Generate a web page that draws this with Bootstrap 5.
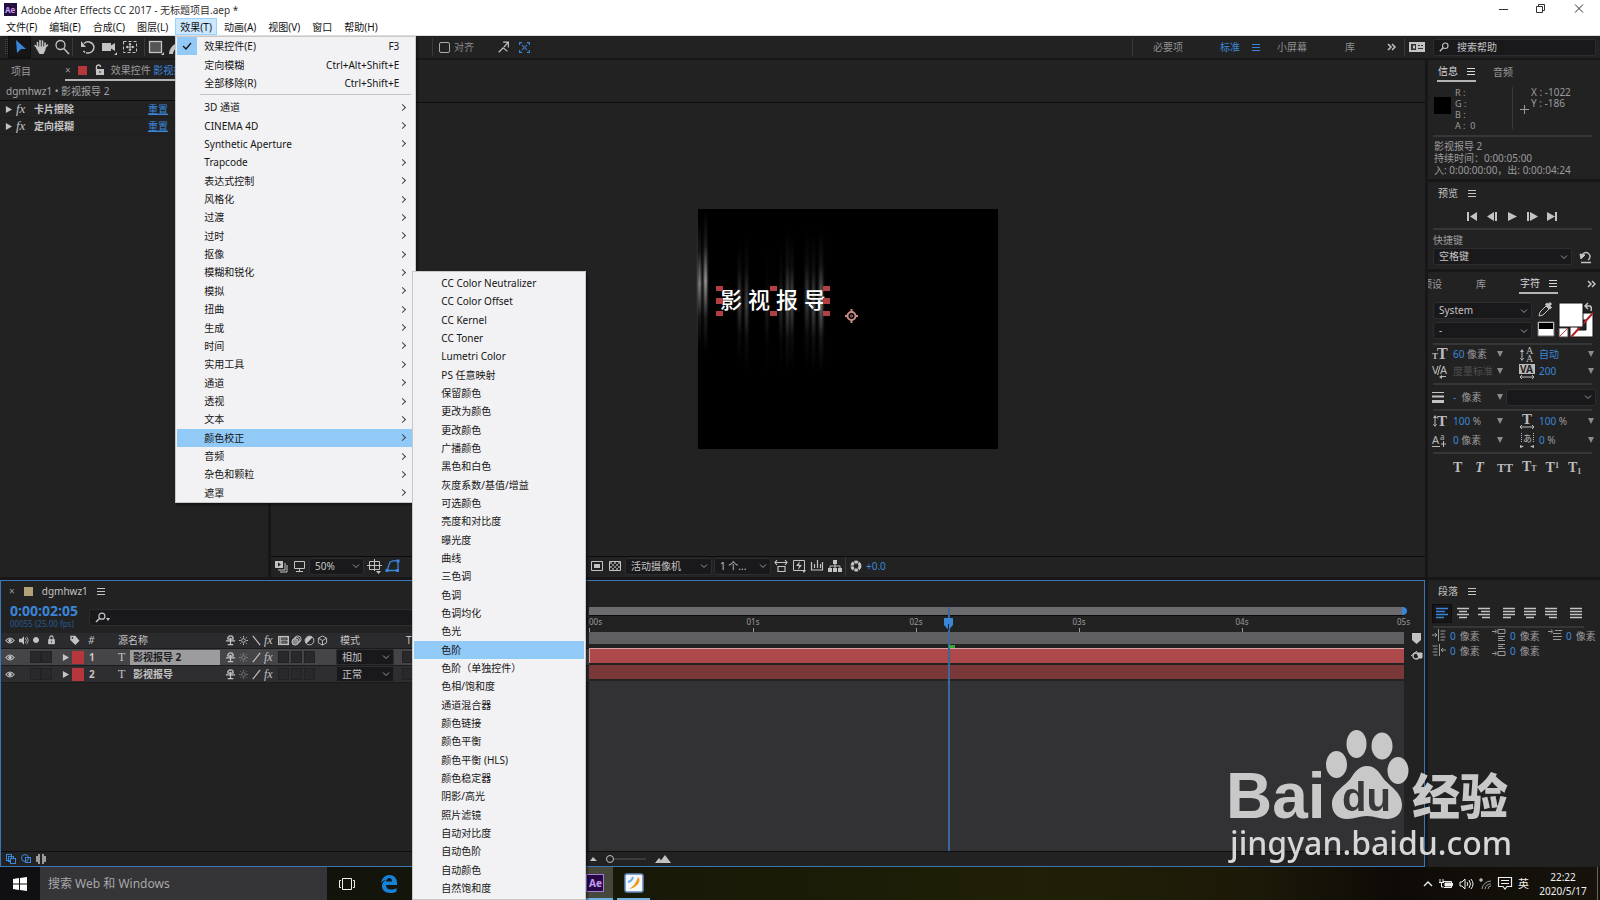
<!DOCTYPE html>
<html lang="zh-CN">
<head>
<meta charset="utf-8">
<meta name="viewport" content="width=device-width, initial-scale=1">
<title>Adobe After Effects CC 2017 - 无标题项目.aep *</title>
<link rel="stylesheet" href="https://cdn.jsdelivr.net/npm/bootstrap@5.3.0/dist/css/bootstrap.min.css">
<style>
:root{--panel:#232223;--gap:#171618;--rule:#363537;--txt:#9b9a9b;--hi:#c4c3c4;--blue:#3a86d8;--red:#b6373b}
body{font-family:"Noto Sans","Noto Sans CJK SC",sans-serif;font-size:10px;line-height:14px;color:var(--txt);background:var(--gap);overflow:hidden}
svg{display:block;flex:none;overflow:visible}
svg:not([fill]){fill:none}
svg:not([stroke]){stroke:currentColor}
button,.plain{font:inherit;color:inherit;background:none;border:0;padding:0;text-decoration:none;white-space:nowrap}
.plain:focus{outline:0}
.plain::placeholder{color:inherit;opacity:1}
.ic{width:16px;height:16px}
.ham{width:8px;height:8px}
.hi{color:var(--hi)} .hot{color:var(--blue)} .mid{color:var(--txt)} .dim{color:#4f4e50}
.solid{fill:currentColor;stroke:none}
.titlebar{height:18px;background:#fff;color:#333}
.titlebar .name{padding-top:2px}
.win-buttons{gap:26px;margin-right:15px}
.menubar{height:18px;background:#fff;color:#111;border-bottom:1px solid #ddd;padding-left:1px;gap:2px}
.menubar .top{padding:0 5px;height:17px}
.menubar .opened{background:#cce8ff;box-shadow:inset 0 0 0 1px #99d1ff}
/* menus */
.popmenu{position:absolute;z-index:20;background:#f2f1f3;color:#151515;border:1px solid #c9c8ca;display:flex;flex-direction:column;padding:0 1px;box-shadow:2px 2px 2px #0006}
.popmenu .row-item{flex:1 1 0;min-height:0;display:flex;align-items:center;text-align:left;padding:0 15px 0 27px;position:relative}
.popmenu .row-item.on{background:#91c9f7}
.popmenu .row-item.sub::after{content:"";position:absolute;right:9px;width:5px;height:5px;border:solid #444;border-width:1px 1px 0 0;transform:rotate(45deg)}
.popmenu hr{margin:2px 3px 3px 23px;border:0;border-top:1px solid #c4c3c5;opacity:1}
.popmenu .tick{position:absolute;left:0;top:0;width:20px;height:100%;background:#91c9f7}
.fx-menu{left:0;top:18px;width:241px;height:467px}
.color-menu{left:236px;top:234px;width:174px;height:629px;padding:2px 1px}
/* tool bar */
.tools{height:22px;background:var(--panel);margin-bottom:2px}
.vsep{width:1px;height:18px;background:#3a393a;flex:none}
.tool{width:21px;height:20px;display:flex;align-items:center;justify-content:center}
.tool.active{background:#161517;box-shadow:0 0 0 1px #0e0e0f}
.tools-hidden{width:266px;flex:none}
.snap-label{padding-left:6px;gap:4px;margin-right:19px;color:#8a898a}
.tick-box.form-check-input{width:11px;height:11px;margin:0;background:none;border:1px solid #aaa;border-radius:2px}
.spaces{width:468px;color:#8f8e8f}
.spaces button{flex:none;text-align:left;padding-left:20px}
.w-a{width:67px}.w-b{width:57px;gap:12px}.w-c{width:68px}.w-d{width:42px}
.field{background-color:#19181a;border:1px solid #2d2c2e;color:var(--hi);font-size:10px;line-height:13px;padding:0 5px;border-radius:2px;height:17px;min-height:0}
.form-select.field{background-image:url("data:image/svg+xml,%3csvg xmlns='http://www.w3.org/2000/svg' viewBox='0 0 8 8'%3e%3cpath fill='none' stroke='%23999' d='M1 2.500 4 5.500 7 2.500'/%3e%3c/svg%3e");background-repeat:no-repeat;background-size:8px 8px;background-position:right 3px center;padding:0 12px 0 5px}
/* workspace */
.space{display:grid;grid-template:516fr 287fr / 268px minmax(0,1fr) 172px;gap:3px;flex:1;min-height:0}
.pane{background:var(--panel);min-width:0;min-height:0;overflow:hidden}
.tabs{height:22px;display:flex;align-items:center;flex:none}
.tabs .cur{color:#dad9da;border-bottom:2px solid #b5b4b5;height:20px;display:flex;align-items:center;gap:9px;padding:0 1px}
.tabs .plain-tab{padding:0 34px 0 11px}
.tabs .fx-tab{gap:7px;padding:0;flex:1}
.swatch{width:9px;height:9px;flex:none;background:var(--red)}
.swatch.sand{background:#b3a17c}
.comp-name{padding:2px 6px;height:19px;border-bottom:1px solid #0c0b0d;color:#a5a4a5}
.effect{height:17px;border-bottom:1px solid #1d1c1e;gap:4px;color:var(--hi);font-weight:700;padding:0 5px}
.effect a{color:var(--blue);font-weight:400}
.effect .title{width:110px}
.fxmark{font:italic 13px "Liberation Serif",serif;width:14px}
.comp-head{height:43px;border-bottom:1px solid #0c0b0d}
.stage{width:300px;height:240px;background:#000;position:relative;flex:none}
.stage svg{position:absolute;left:0;top:0}
.caption-line{position:absolute;left:22px;top:73px;font:500 22px/32px "Noto Sans CJK SC",sans-serif;gap:6px;color:#fff}
.viewbar{height:21px;border-top:1px solid #0c0b0d;gap:2px;padding:0 0 1px 2px}
.w-55{width:55px}.w-57{width:57px}.w-87{width:87px}
.viewbar-hidden{width:185px;flex:none}
/* timeline */
.timeline{grid-column:1/3;border:1px solid #3c76b4;display:flex;position:relative}
.left-side{width:588px;flex:none;display:flex;flex-direction:column}
.tl-tab{height:21px;padding-left:8px;gap:9px}
.tl-head{height:31px}
.clock-box{width:88px;padding:1px 0 0 9px}
.code-text{font:700 14px/16px "Open Sans",sans-serif;color:var(--blue)}
.frames{font-size:8px;line-height:10px;color:#245a92}
.tl-find{flex:1;margin-top:7px}
.layers{width:100%;table-layout:fixed;border-collapse:collapse}
.layers th,.layers td{height:16px;padding:0;font-weight:400;vertical-align:middle;border-bottom:1px solid #1b1a1c;overflow:hidden;color:var(--hi)}
.layers th{background:#2b2a2c}
.layers td{background:#2e2d2f;height:17px}
.layers .sel td{background:#454446}
.c1{width:57px}.c2{width:48px}.c3{width:115px}.c4{width:115px}.c5{width:62px}
.th-tag{padding-left:11px}.th-name{padding-left:12px}
.sw{padding-left:4px;gap:2px}
.sw svg{width:11px;height:11px}
.sw i{font:italic 12px "Liberation Serif",serif;width:12px}
.sw .faint{opacity:.5}
.cellbox{width:11px;height:12px;background:#29282a;flex:none;border:1px solid #222123}
.eye-on{margin-right:15px}
.twirl{margin:0 3px 0 4px}
.label-red{width:12px;height:13px;background:var(--red);margin-right:5px}
.type-t{width:24px;padding-left:12px;font:12px "Liberation Serif",serif}
.lname{height:15px;width:90px;font-weight:700;padding-left:3px}
.sel .lname{background:#9c9b9d;color:#1c1b1d}
.mode{height:16px;width:58px}
.tracks{flex:1;min-width:0;display:flex;flex-direction:column;position:relative;margin-right:20px}
.navbar-time{height:8px;background:#6c6b6d;margin-top:26px;position:relative}
.navbar-time svg{position:absolute;right:-3px;top:0}
.ruler{height:17px;display:flex;position:relative;font-size:8px;line-height:12px;border-top:1px solid #0d0c0e}
.ruler i{font-style:normal;flex:1 1 0;width:0}
.ruler i span{display:inline-block;width:20px;margin-left:-9px;text-align:center;background:linear-gradient(#999,#999) center bottom/1px 4px no-repeat;height:16px}
.ruler i:first-child span{margin-left:0;text-align:left;background-position:left bottom}
.ruler .last{position:absolute;right:-6px}
.workarea{height:12px;background:#5f5e60;margin-bottom:4px}
.clip1{height:15px;background:#ad484b;border-top:1px solid #d9a3a4;border-left:1px solid #d9a3a4;margin-bottom:2px}
.clip2{height:14px;background:#7b3839;margin-bottom:2px}
.track-empty{flex:1;background:#323133}
.head{position:absolute;left:44%;top:26px;bottom:15px;width:2px;background:#39699b}
.head .knob{position:absolute;left:-5px;top:11px}
.head .cached{position:absolute;left:1px;top:38px}
.zoombar{height:15px;border-top:1px solid #0e0d0f;flex:none;gap:5px;padding-left:5px}
.zoombar.flush{padding-left:0}
.markers{position:absolute;right:1px;top:51px}
/* right column */
.rside{grid-row:1/3;grid-column:3;display:flex;flex-direction:column;min-height:0;gap:3px}
.rule{height:2px;background:var(--rule);margin:0 8px 0 5px}
.info-pane{height:119px;flex:none}
.info-pane .tabs{padding:1px 0 0 9px;gap:17px}
.info-grid{line-height:11px;padding:5px 0 0 6px;height:53px}
.info-grid .chip{width:17px;height:17px;background:#000;margin:10px 4px 0 0}
.info-grid .rgb{width:57px;font-size:9px}
.info-grid .bar{width:1px;height:42px;background:#3a393a}
.info-grid .plus{margin:18px 2px 0 7px}
.info-text{line-height:12px;padding:3px 0 0 6px}
.preview-pane{height:87px;flex:none}
.one-tab{height:22px;display:flex;align-items:center;padding-left:10px;gap:10px}
.transport{padding:8px 0 0 38px;height:24px;gap:8px}
.key-label{padding:3px 0 1px 5px}
.key-row{padding:0 8px 0 5px;gap:8px}
.char-tabs{height:23px}
.char-tabs .t1{margin-left:-6px}.char-tabs .t2{margin-left:34px}.char-tabs .t3{margin-left:33px}
.font-row{padding:7px 6px 4px 5px;height:48px;gap:6px}
.font-col{width:100px;gap:3px}
.char-row{display:grid;grid-template-columns:21px 44px 22px 20px 1fr 8px;align-items:center;height:17px;padding:0 4px;white-space:nowrap}
.char-row.stroke-row{height:24px;grid-template-columns:21px 44px 9px 1fr}
.char-row.tall{height:20px}
.dn{width:0;height:0;border:3px solid transparent;border-top:6px solid #8d8c8d;border-bottom:0}
.styles{font-family:"Liberation Serif",serif;font-size:14px;font-weight:700;color:#bbb;line-height:16px;padding:5px 0 0 25px;gap:9px}
.styles sup,.styles sub,.styles small{font-size:8px;font-weight:700}
.styles .caps{font-size:12px}
.para-pane{flex:none;height:calc((100% - 3px)*287/803)}
.aligns{padding:3px 0 0 5px;height:20px;gap:3px}
.aligns .tool{width:18px;height:17px}
.aligns svg,.para-row svg{width:14px;height:12px}
.para-pane .rule{margin:4px 16px 1px 5px}
.para-row{display:grid;grid-template-columns:60px 56px 1fr;padding-left:4px;height:15px;align-items:center;white-space:nowrap}
.para-row span{display:flex;gap:4px}
/* task bar */
.taskbar{height:33px;background:linear-gradient(90deg,#0b0a06 0,#12130b 20%,#191a07 45%,#202006 65%,#1c1a08 78%,#0e0b07 87%,#17130c 100%);color:#f0f0f0}
.start{width:40px;background:#101012}
.find{width:287px;height:33px;background:#353437;color:#a9a8aa;border:0;font-size:12px;padding:0 8px}
.find::placeholder{color:#a9a8aa;opacity:1}
.taskview{margin:0 24px 0 11px}
.taskbar-hidden{width:185px;flex:none}
.app{height:33px;border-bottom:2px solid #6fb0e0;display:flex;align-items:center}
.app.running{background:#45483a;width:30px;padding-left:3px}
.app.paint{width:33px;justify-content:center;margin-left:4px}
.tray{gap:6px}
.clock{width:52px;margin:0 8px 0 2px}
.peek{width:1px;height:33px;background:#666;margin-right:2px}
.ime{font-size:11px}
.stamp{position:fixed;right:84px;bottom:34px;z-index:5;pointer-events:none}
</style>
</head>
<body class="vh-100 d-flex flex-column">
<svg width="0" height="0" class="position-absolute">
<symbol id="arrow" viewBox="0 0 16 16"><path d="M4 1l10 9H9l-4 4z" class="solid"/></symbol>
<symbol id="hand" viewBox="0 0 16 16"><path d="M4.500 9V3.500M7 8V1.500M9.500 8V2M12 9V4M4.500 9 2 6.500M12 8.500 14.500 6" stroke-width="1.600" stroke-linecap="round"/><path d="M4 7.500h8.500V11L10.500 15H6.500L3 9z" class="solid"/></symbol>
<symbol id="lens" viewBox="0 0 16 16"><circle cx="6.500" cy="6" r="4.500" stroke-width="1.300"/><path d="M9.800 9.500 15 15" stroke-width="1.600"/></symbol>
<symbol id="rot" viewBox="0 0 16 16"><path d="M4 4.500A6 6 0 0 1 14 8a6 6 0 0 1-6 6" stroke-width="1.500"/><path d="M8 14a6 6 0 0 1-5-2.500" stroke-width="1.500" stroke-dasharray="2 1"/><path d="M1 2v6h5z" class="solid"/></symbol>
<symbol id="cam" viewBox="0 0 16 16"><path d="M1 4h9v2.500L14 4v8l-4-2.500V12H1zM16 16h-3l3-3z" class="solid"/></symbol>
<symbol id="pan" viewBox="0 0 16 16"><rect x="1.500" y="2.500" width="13" height="11" stroke-dasharray="3 2"/><path d="M8 4v8M4 8h8"/><path d="M8 3.500 9.500 6h-3zM8 12.500 9.500 10h-3zM3.500 8 6 6.500v3zM12.500 8 10 6.500v3z" class="solid"/></symbol>
<symbol id="sq" viewBox="0 0 16 16"><rect x="1.500" y="2.500" width="12" height="11" fill="#555" stroke-width="1.300"/><path d="M16 16h-3l3-3z" class="solid"/></symbol>
<symbol id="snap" viewBox="0 0 16 16"><path d="M2 14 7 9l5 4M7 2.500h6v6M13 2.500 8 8" stroke-width="1.300"/></symbol>
<symbol id="exp" viewBox="0 0 16 16"><path d="M2 5V2h3M11 2h3v3M14 11v3h-3M5 14H2v-3M5 5l2 2M11 5 9 7M5 11l2-2M11 11 9 9" stroke-width="1.400"/><circle cx="8" cy="8" r="1"/></symbol>
<symbol id="ham" viewBox="0 0 8 8"><path d="M0 1.500h8M0 4.500h8M0 7.500h8"/></symbol>
<symbol id="lock" viewBox="0 0 10 12"><rect x="1" y="5" width="8" height="6" class="solid"/><path d="M3 5V3a2 2 0 0 1 4 0v2" stroke-width="1.300"/><path d="M5 7v2" stroke="#222"/></symbol>
<symbol id="unlock" viewBox="0 0 10 12"><rect x="2" y="5" width="8" height="6" class="solid"/><path d="M2.500 7V3a2 2 0 0 1 4 0" stroke-width="1.400"/><path d="M6 7v2" stroke="#222"/></symbol>
<symbol id="tri" viewBox="0 0 8 8"><path d="M1 0l7 4-7 4z" class="solid"/></symbol>
<symbol id="find" viewBox="0 0 12 12"><circle cx="7.500" cy="4.500" r="3.300" stroke-width="1.300"/><path d="M5 7 1 11" stroke-width="1.600"/></symbol>
<symbol id="eye" viewBox="0 0 12 10"><path d="M1 5q5-6 10 0-5 6-10 0z" stroke-width="1.300"/><circle cx="6" cy="5" r="1.700" fill="currentColor"/></symbol>
<symbol id="spk" viewBox="0 0 12 10"><path d="M0 3h3l3-3v10L3 7H0z" class="solid"/><path d="M7.500 2q3 3 0 6M9 .5q4 4.500 0 9"/></symbol>
<symbol id="tag" viewBox="0 0 12 12"><path d="M1 1h6l5 6-5 5-6-6z" class="solid"/><circle cx="3.500" cy="3.500" r="1" fill="#222" stroke="none"/></symbol>
<symbol id="shy" viewBox="0 0 12 12"><path d="M3 5V4a3 3 0 0 1 6 0v1M1 6.500h10M6 3v8M3 10.500h6M3.500 4.500h5" stroke-width="1.300"/></symbol>
<symbol id="sun" viewBox="0 0 12 12"><circle cx="6" cy="6" r="2"/><path d="M6 1v2M6 9v2M1 6h2M9 6h2M2.500 2.500l1 1M8.500 8.500l1 1M9.500 2.500l-1 1M3.500 8.500l-1 1"/></symbol>
<symbol id="slash" viewBox="0 0 12 12"><path d="M10 1l-8 10" stroke-width="1.300"/></symbol>
<symbol id="back" viewBox="0 0 12 12"><path d="M2 1l8 10" stroke-width="1.300"/></symbol>
<symbol id="film" viewBox="0 0 12 12"><path d="M0 1h12v10H0z" class="solid"/><path d="M4 3h6v2.500H4zM4 7h6v2H4zM2 2v8" fill="#777" stroke="#222" stroke-width=".7"/></symbol>
<symbol id="blur" viewBox="0 0 12 12"><circle cx="7.500" cy="4.500" r="3.500"/><circle cx="6" cy="6" r="3.500"/><circle cx="4.500" cy="7.500" r="3.500" fill="#888"/></symbol>
<symbol id="half" viewBox="0 0 12 12"><circle cx="6" cy="6" r="4.800"/><path d="M2.500 9.500a5 5 0 0 1 7-7z" class="solid"/></symbol>
<symbol id="cube" viewBox="0 0 12 12"><path d="M6 1l4.500 2.500v5L6 11 1.500 8.500v-5zM1.500 3.500 6 6l4.500-2.500M6 6v5"/></symbol>
<symbol id="more" viewBox="0 0 9 8"><path d="M1 1l3 3-3 3M5 1l3 3-3 3" stroke-width="1.500"/></symbol>
<symbol id="alines" viewBox="0 0 14 12"><path d="M1 1.500h12M1 4.500h9M1 7.500h12M1 10.500h8" stroke-width="1.300"/></symbol>
<symbol id="clines" viewBox="0 0 14 12"><path d="M1 1.500h12M3 4.500h8M1 7.500h12M3 10.500h8" stroke-width="1.300"/></symbol>
<symbol id="rlines" viewBox="0 0 14 12"><path d="M1 1.500h12M4 4.500h9M1 7.500h12M5 10.500h8" stroke-width="1.300"/></symbol>
<symbol id="jl" viewBox="0 0 14 12"><path d="M1 1.500h12M1 4.500h12M1 7.500h12M1 10.500h8" stroke-width="1.300"/></symbol>
<symbol id="jc" viewBox="0 0 14 12"><path d="M1 1.500h12M1 4.500h12M1 7.500h12M3 10.500h8" stroke-width="1.300"/></symbol>
<symbol id="jr" viewBox="0 0 14 12"><path d="M1 1.500h12M1 4.500h12M1 7.500h12M5 10.500h8" stroke-width="1.300"/></symbol>
<symbol id="jlines" viewBox="0 0 14 12"><path d="M1 1.500h12M1 4.500h12M1 7.500h12M1 10.500h12" stroke-width="1.300"/></symbol>
<symbol id="indent" viewBox="0 0 14 12"><path d="M0 6h5M3 4l2 2-2 2M6.500 0v12M8.500 2h5M8.500 5h4M8.500 8h5M8.500 11h4"/></symbol>
<symbol id="indentr" viewBox="0 0 14 12"><path d="M14 6H9M11 4 9 6l2 2M7.500 0v12M.5 2h5M1.500 5h4M.5 8h5M1.500 11h4"/></symbol>
<symbol id="before" viewBox="0 0 14 12"><path d="M0 2.500h4M3 .5l2 2-2 2M6 .5h7v4H6zM6 7.500h7M6 9.500h5M6 11.500h7"/></symbol>
<symbol id="after" viewBox="0 0 14 12"><path d="M0 9.500h4M3 7.500l2 2-2 2M6 7.500h7v4H6zM6 .5h7M6 2.500h5M6 4.500h7"/></symbol>
<symbol id="first" viewBox="0 0 14 12"><path d="M0 2.500h4M3 .5l2 2-2 2M7 1.500h7M5 4.500h8M5 7.500h9M5 10.500h8"/></symbol>
</svg>

<header class="titlebar d-flex align-items-center text-nowrap">
  <svg width="13" height="13" class="ms-1 me-1" viewBox="0 0 13 13" stroke="none"><rect width="13" height="13" fill="#24103f"/><text x="1" y="9.500" fill="#c79bf2" font-size="8" font-weight="700">Ae</text></svg>
  <span class="name flex-grow-1">Adobe After Effects CC 2017 - 无标题项目.aep *</span>
  <div class="win-buttons d-flex">
    <button aria-label="最小化"><svg width="12" height="12"><path d="M2 6.500h9"/></svg></button>
    <button aria-label="还原"><svg width="12" height="12"><path d="M1.500 3.500h6v6h-6zM3.500 3V1.500h6v6H8"/></svg></button>
    <button aria-label="关闭"><svg width="12" height="12"><path d="M2 1.500l8 8M10 1.500l-8 8"/></svg></button>
  </div>
</header>

<nav class="menubar d-flex align-items-start">
  <button class="top">文件(F)</button><button class="top">编辑(E)</button><button class="top">合成(C)</button><button class="top">图层(L)</button>
  <div class="position-relative">
    <button class="top opened">效果(T)</button>
    <div class="popmenu fx-menu">
      <button class="row-item"><span class="tick"><svg class="mx-auto mt-1" width="10" height="10"><path d="M1 5l3 3 5-6" stroke-width="1.300"/></svg></span>效果控件(E)<span class="ms-auto">F3</span></button>
      <button class="row-item">定向模糊<span class="ms-auto">Ctrl+Alt+Shift+E</span></button>
      <button class="row-item">全部移除(R)<span class="ms-auto">Ctrl+Shift+E</span></button>
      <hr>
      <button class="row-item sub">3D 通道</button>
      <button class="row-item sub">CINEMA 4D</button>
      <button class="row-item sub">Synthetic Aperture</button>
      <button class="row-item sub">Trapcode</button>
      <button class="row-item sub">表达式控制</button>
      <button class="row-item sub">风格化</button>
      <button class="row-item sub">过渡</button>
      <button class="row-item sub">过时</button>
      <button class="row-item sub">抠像</button>
      <button class="row-item sub">模糊和锐化</button>
      <button class="row-item sub">模拟</button>
      <button class="row-item sub">扭曲</button>
      <button class="row-item sub">生成</button>
      <button class="row-item sub">时间</button>
      <button class="row-item sub">实用工具</button>
      <button class="row-item sub">通道</button>
      <button class="row-item sub">透视</button>
      <button class="row-item sub">文本</button>
      <button class="row-item sub on">颜色校正</button>
      <button class="row-item sub">音频</button>
      <button class="row-item sub">杂色和颗粒</button>
      <button class="row-item sub">遮罩</button>
      <div class="popmenu color-menu">
        <button class="row-item">CC Color Neutralizer</button>
        <button class="row-item">CC Color Offset</button>
        <button class="row-item">CC Kernel</button>
        <button class="row-item">CC Toner</button>
        <button class="row-item">Lumetri Color</button>
        <button class="row-item">PS 任意映射</button>
        <button class="row-item">保留颜色</button>
        <button class="row-item">更改为颜色</button>
        <button class="row-item">更改颜色</button>
        <button class="row-item">广播颜色</button>
        <button class="row-item">黑色和白色</button>
        <button class="row-item">灰度系数/基值/增益</button>
        <button class="row-item">可选颜色</button>
        <button class="row-item">亮度和对比度</button>
        <button class="row-item">曝光度</button>
        <button class="row-item">曲线</button>
        <button class="row-item">三色调</button>
        <button class="row-item">色调</button>
        <button class="row-item">色调均化</button>
        <button class="row-item">色光</button>
        <button class="row-item on">色阶</button>
        <button class="row-item">色阶（单独控件）</button>
        <button class="row-item">色相/饱和度</button>
        <button class="row-item">通道混合器</button>
        <button class="row-item">颜色链接</button>
        <button class="row-item">颜色平衡</button>
        <button class="row-item">颜色平衡 (HLS)</button>
        <button class="row-item">颜色稳定器</button>
        <button class="row-item">阴影/高光</button>
        <button class="row-item">照片滤镜</button>
        <button class="row-item">自动对比度</button>
        <button class="row-item">自动色阶</button>
        <button class="row-item">自动颜色</button>
        <button class="row-item">自然饱和度</button>
      </div>
    </div>
  </div>
  <button class="top">动画(A)</button><button class="top">视图(V)</button><button class="top">窗口</button><button class="top">帮助(H)</button>
</nav>

<div class="tools d-flex align-items-center hi">
  <svg width="5" height="16" class="ms-1"><path d="M1.500 0v16M3.500 0v16" stroke="#444" stroke-dasharray="1 1"/></svg>
  <button class="tool active hot" aria-label="选取"><svg class="ic"><use href="#arrow"/></svg></button>
  <button class="tool" aria-label="手形"><svg class="ic"><use href="#hand"/></svg></button>
  <button class="tool" aria-label="缩放"><svg class="ic"><use href="#lens"/></svg></button>
  <div class="vsep"></div>
  <button class="tool ms-1" aria-label="旋转"><svg class="ic"><use href="#rot"/></svg></button>
  <button class="tool" aria-label="摄像机"><svg class="ic"><use href="#cam"/></svg></button>
  <button class="tool" aria-label="锚点"><svg class="ic"><use href="#pan"/></svg></button>
  <div class="vsep ms-1"></div>
  <button class="tool" aria-label="矩形"><svg class="ic"><use href="#sq"/></svg></button>
  <div class="tools-hidden"><svg width="16" height="16"><path d="M5 15q0-5 6-9" stroke-width="4"/></svg></div>
  <div class="vsep"></div>
  <label class="snap-label d-flex align-items-center"><input type="checkbox" class="form-check-input tick-box">对齐</label>
  <button class="tool" aria-label="捕捉"><svg width="14" height="14"><use href="#snap"/></svg></button>
  <button class="tool hot" aria-label="扩展"><svg width="13" height="13"><use href="#exp"/></svg></button>
  <div class="spaces ms-auto d-flex align-items-center">
    <div class="vsep"></div>
    <button class="w-a">必要项</button>
    <button class="w-b hot d-flex align-items-center">标准<svg class="ham"><use href="#ham"/></svg></button>
    <button class="w-c">小屏幕</button>
    <button class="w-d">库</button>
    <button class="hi" aria-label="更多"><svg width="9" height="8"><use href="#more"/></svg></button>
    <div class="vsep ms-2"></div>
    <svg class="ms-1 hi" width="16" height="10" stroke="none"><rect width="16" height="10" fill="currentColor"/><path d="M2 2h5v6H2zM9 3h5v1H9zM9 6h5v1H9z" fill="#333"/><path d="M4 3.500h2v3H4zM11 2h1v3h-1z" fill="#ccc"/></svg>
    <label class="field d-flex align-items-center mx-2 me-1 flex-grow-1"><svg width="10" height="10"><use href="#find"/></svg><input class="plain ms-2 w-100" placeholder="搜索帮助" aria-label="搜索帮助"></label>
  </div>
</div>

<main class="space">
  <section class="pane">
    <div class="tabs"><button class="plain-tab">项目</button>
      <button class="cur fx-tab"><span class="mid">×</span><span class="swatch"></span><svg class="hi" width="10" height="12"><use href="#unlock"/></svg><span class="mid">效果控件 <span class="hot">影视报导 2</span></span></button></div>
    <div class="comp-name">dgmhwz1 • 影视报导 2</div>
    <div class="effect d-flex align-items-center"><svg width="7" height="7"><use href="#tri"/></svg><i class="fxmark">fx</i><span class="title">卡片擦除</span><a href="#">重置</a></div>
    <div class="effect d-flex align-items-center"><svg width="7" height="7"><use href="#tri"/></svg><i class="fxmark">fx</i><span class="title">定向模糊</span><a href="#">重置</a></div>
  </section>

  <section class="pane d-flex flex-column">
    <div class="comp-head"></div>
    <div class="flex-grow-1 d-flex align-items-center justify-content-center">
      <div class="stage">
        <svg width="300" height="240" stroke="none">
          <defs><linearGradient id="ray" x1="0" y1="0" x2="0" y2="1"><stop offset="0" stop-color="#fff" stop-opacity="0"/><stop offset=".25" stop-color="#fff" stop-opacity=".2"/><stop offset=".5" stop-color="#fff"/><stop offset=".75" stop-color="#fff" stop-opacity=".2"/><stop offset="1" stop-color="#fff" stop-opacity="0"/></linearGradient><filter id="soft" color-interpolation-filters="sRGB"><feGaussianBlur stdDeviation="1 0"/></filter></defs>
          <g fill="url(#ray)" filter="url(#soft)"><rect x="0" y="10" width="3" height="130" opacity=".6"/><rect x="6" y="0" width="3" height="145" opacity=".7"/><rect x="40" y="30" width="3" height="125" opacity=".3"/><rect x="47" y="25" width="3" height="140" opacity=".3"/><rect x="68" y="40" width="2" height="125" opacity=".15"/><rect x="82" y="30" width="2" height="135" opacity=".25"/><rect x="88" y="20" width="3" height="145" opacity=".4"/><rect x="93" y="25" width="2" height="135" opacity=".5"/><rect x="107" y="20" width="4" height="140" opacity=".25"/><rect x="114" y="25" width="3" height="140" opacity=".35"/><rect x="121" y="20" width="4" height="145" opacity=".45"/></g>
        </svg>
        <div class="caption-line d-flex"><span>影</span><span>视</span><span>报</span><span>导</span></div>
        <svg width="300" height="240" stroke="none"><path fill="#b33f45" d="M18 77h7v5h-7zM18 89h7v6h-7zM18 102h7v5h-7zM72 77h7v5h-7zM72 102h7v5h-7zM125 77h7v5h-7zM125 89h7v6h-7zM125 102h7v5h-7z"/><g stroke="#c98a8a" fill="none"><circle cx="153.500" cy="107" r="4" stroke-width="2"/><circle cx="153.500" cy="107" r="1"/><path d="M153.500 100v3M153.500 111v3M147 107h3M157 107h3" stroke-width="2"/></g></svg>
      </div>
    </div>
    <div class="viewbar d-flex align-items-center hi">
      <svg class="ic" viewBox="0 0 16 16"><path d="M2 3h8v7H2z" class="solid"/><path d="M12 5v7H5M14 7v7H7"/><path d="M5 4.500l3 2-3 2z" fill="#222" stroke="none"/></svg>
      <svg class="ic" viewBox="0 0 16 16"><path d="M3.500 3.500h10v7h-10zM8.500 11v3M5 13.500h7"/></svg>
      <select class="form-select field w-55" aria-label="放大率"><option>50%</option></select>
      <svg class="ic" viewBox="0 0 16 16"><path d="M3.500 3.500h10v8h-10zM8.500 1v12M1 7.500h15"/><path d="M10 13h5l-2.500 3z" class="solid"/></svg>
      <svg class="ic hot" viewBox="0 0 16 16"><path d="M3 12.500 6 4q5-2 8-1v9.500z" stroke-width="1.300"/><path d="M1.500 11h3v3h-3zM12 11h3v3h-3zM12.500 1.500h3v3h-3z" class="solid"/></svg>
      <div class="viewbar-hidden"></div>
      <svg class="ic" viewBox="0 0 16 16"><path d="M2.500 3.500h11v9h-11z"/><path d="M5 6h6v4H5z" class="solid"/></svg>
      <svg class="ic" viewBox="0 0 16 16"><path d="M2.500 3.500h11v9h-11z"/><path d="M3 4h2v2H3zM7 4h2v2H7zM11 4h2v2h-2zM5 6h2v2H5zM9 6h2v2H9zM3 8h2v2H3zM7 8h2v2H7zM11 8h2v2h-2zM5 10h2v2H5zM9 10h2v2H9z" class="solid" opacity=".6"/></svg>
      <select class="form-select field w-87" aria-label="3D 视图"><option>活动摄像机</option></select>
      <select class="form-select field w-57" aria-label="视图布局"><option>1 个...</option></select>
      <svg class="ic" viewBox="0 0 16 16"><path d="M2 4.500h12M4 2 2 4.500 4 7M12 2l2 2.500L12 7M5 8.500h7v5H5z" stroke-width="1.200"/></svg>
      <svg class="ic" viewBox="0 0 16 16"><path d="M2.500 2.500h11v10h-11z"/><path d="M9 3 5 8h3l-1 4 4-5H8zM11 12h4l-2 3z" class="solid"/></svg>
      <svg class="ic" viewBox="0 0 16 16"><path d="M2.500 4v8h11V4M5.500 6v4M8.500 2v8M11.500 6v4" stroke-width="1.200"/></svg>
      <svg class="ic" viewBox="0 0 16 16"><path d="M6 2h4v4H6zM1 10h4v4H1zM6 10h4v4H6zM11 10h4v4h-4z" class="solid"/><path d="M8 5v5M3 10V8h10v2"/></svg>
      <div class="vsep"></div>
      <svg class="ic" viewBox="0 0 16 16"><circle cx="8" cy="8" r="4" stroke-width="3" stroke-dasharray="3.500 .7"/></svg>
      <button class="hot">+0.0</button>
    </div>
  </section>

  <section class="pane timeline">
    <div class="left-side">
      <div class="tl-tab d-flex align-items-center"><span>×</span><span class="swatch sand"></span><span class="hi">dgmhwz1</span><svg class="ham hi"><use href="#ham"/></svg></div>
      <div class="tl-head d-flex">
        <div class="clock-box"><div class="code-text">0:00:02:05</div><div class="frames text-nowrap">00055 (25.00 fps)</div></div>
        <label class="field tl-find d-flex align-items-center"><svg width="11" height="11"><use href="#find"/></svg><svg width="4" height="3" class="mt-1"><path d="M0 0h4L2 3z" class="solid"/></svg><input class="plain" aria-label="搜索图层"></label>
      </div>
      <table class="layers">
        <colgroup><col class="c1"><col class="c2"><col class="c3"><col class="c4"><col class="c5"><col></colgroup>
        <thead><tr>
          <th><div class="d-flex align-items-center ps-1 gap-1"><svg width="10" height="9"><use href="#eye"/></svg><svg width="10" height="9"><use href="#spk"/></svg><svg width="6" height="6"><circle cx="3" cy="3" r="2.500" fill="currentColor"/></svg><svg class="ms-1" width="9" height="10"><use href="#lock"/></svg></div></th>
          <th><div class="th-tag d-flex align-items-center gap-2"><svg width="11" height="10"><use href="#tag"/></svg><i>#</i></div></th>
          <th><span class="th-name">源名称</span></th>
          <th><div class="sw d-flex align-items-center"><svg><use href="#shy"/></svg><svg><use href="#sun"/></svg><svg><use href="#back"/></svg><i>fx</i><svg><use href="#film"/></svg><svg><use href="#blur"/></svg><svg><use href="#half"/></svg><svg><use href="#cube"/></svg></div></th>
          <th><span class="ps-1">模式</span></th><th><span class="ps-2">T</span></th></tr></thead>
        <tbody>
        <tr class="sel">
          <td><div class="d-flex align-items-center ps-1"><svg class="eye-on" width="10" height="9"><use href="#eye"/></svg><span class="cellbox"></span><span class="cellbox"></span></div></td>
          <td><div class="d-flex align-items-center"><svg class="twirl" width="7" height="7"><use href="#tri"/></svg><span class="label-red"></span><b>1</b></div></td>
          <td><div class="d-flex align-items-center"><span class="type-t">T</span><span class="lname">影视报导 2</span></div></td>
          <td><div class="sw d-flex align-items-center"><svg><use href="#shy"/></svg><svg class="faint"><use href="#sun"/></svg><svg><use href="#slash"/></svg><i>fx</i><span class="cellbox"></span><span class="cellbox"></span><span class="cellbox"></span></div></td>
          <td><select class="form-select field mode" aria-label="图层1模式"><option>相加</option></select></td><td><span class="cellbox d-block ms-1"></span></td></tr>
        <tr>
          <td><div class="d-flex align-items-center ps-1"><svg class="eye-on" width="10" height="9"><use href="#eye"/></svg><span class="cellbox"></span><span class="cellbox"></span></div></td>
          <td><div class="d-flex align-items-center"><svg class="twirl" width="7" height="7"><use href="#tri"/></svg><span class="label-red"></span><b>2</b></div></td>
          <td><div class="d-flex align-items-center"><span class="type-t">T</span><span class="lname">影视报导</span></div></td>
          <td><div class="sw d-flex align-items-center"><svg><use href="#shy"/></svg><svg class="faint"><use href="#sun"/></svg><svg><use href="#slash"/></svg><i>fx</i><span class="cellbox"></span><span class="cellbox"></span><span class="cellbox"></span></div></td>
          <td><select class="form-select field mode" aria-label="图层2模式"><option>正常</option></select></td><td><span class="cellbox d-block ms-1"></span></td></tr>
        </tbody>
      </table>
      <div class="flex-grow-1"></div>
      <div class="zoombar d-flex align-items-center hot"><svg width="10" height="10"><rect x=".5" y=".5" width="5" height="6"/><rect x="2.500" y="2.500" width="5" height="5"/><rect x="4.500" y="4.500" width="5" height="5" fill="#232223"/></svg><svg width="10" height="10"><circle cx="4" cy="4" r="3.500"/><rect x="4.500" y="3.500" width="5" height="5"/></svg><svg width="10" height="10" class="hi"><path d="M3 0v10M7 0v10M1 2v6M9 2v6" stroke-width="1.500"/></svg></div>
    </div>
    <div class="tracks">
      <div class="navbar-time"><svg width="5" height="8"><path d="M0 0q5 0 5 4t-5 4z" fill="#3a86d8" stroke="none"/></svg></div>
      <div class="ruler"><i><span>00s</span></i><i><span>01s</span></i><i><span>02s</span></i><i><span>03s</span></i><i><span>04s</span></i><span class="last">05s</span></div>
      <div class="workarea"></div>
      <div class="clip1"></div>
      <div class="clip2"></div>
      <div class="track-empty"></div>
      <div class="zoombar flush d-flex align-items-center hi"><svg width="80" height="12"><path d="M1 8l3-4 4 4zM70 10l6-8 6 8zM66 10l4-5 2 2-2 3z" class="solid"/><circle cx="21" cy="6" r="3.500"/><path d="M25 6h32" stroke="#555"/></svg></div>
      <div class="head"><svg class="knob" width="11" height="12"><path d="M1 0h9v7l-4.500 5L1 7z" fill="#3a86d8" stroke="none"/><path d="M5.500 6v6" stroke="#123"/></svg><svg class="cached" width="6" height="3"><rect width="6" height="3" fill="#38a53a" stroke="none"/></svg></div>
    </div>
    <svg class="markers hi" width="12" height="32"><path d="M1 1h9v7l-4.500 4L1 8z" class="solid"/><circle cx="5" cy="24" r="3" stroke-width="1.300"/><path d="M0 24l6-5M6 21h5v5H8z" fill="currentColor"/></svg>
  </section>

  <aside class="rside">
    <section class="pane info-pane">
      <div class="tabs"><button class="cur">信息<svg class="ham"><use href="#ham"/></svg></button><button>音频</button></div>
      <div class="d-flex info-grid">
        <span class="chip"></span>
        <div class="rgb">R :<br>G :<br>B :<br>A :&nbsp; 0</div><div class="bar"></div>
        <svg class="plus" width="9" height="9"><path d="M4.500 0v9M0 4.500h9"/></svg>
        <div>X : -1022<br>Y : -186</div>
      </div>
      <div class="rule"></div>
      <div class="info-text text-nowrap">影视报导 2<br>持续时间：0:00:05:00<br>入: 0:00:00:00，出: 0:00:04:24</div>
    </section>
    <section class="pane preview-pane">
      <div class="one-tab hi">预览<svg class="ham"><use href="#ham"/></svg></div>
      <div class="transport d-flex align-items-start hi">
        <button aria-label="首帧"><svg width="12" height="9"><path d="M1 0h2v9H1zM11 0v9L4 4.500z" class="solid"/></svg></button>
        <button aria-label="上一帧"><svg width="12" height="9"><path d="M8 0v9L1 4.500zM9 0h2v9H9z" class="solid"/></svg></button>
        <button aria-label="播放"><svg width="12" height="9"><path d="M2 0l9 4.500L2 9z" class="solid"/></svg></button>
        <button aria-label="下一帧"><svg width="12" height="9"><path d="M1 0h2v9H1zM4 0l8 4.500L4 9z" class="solid"/></svg></button>
        <button aria-label="末帧"><svg width="12" height="9"><path d="M1 0l8 4.500L1 9zM9 0h2v9H9z" class="solid"/></svg></button>
      </div>
      <div class="rule"></div>
      <label for="key" class="key-label d-block">快捷键</label>
      <div class="key-row d-flex align-items-center"><select id="key" class="form-select field flex-grow-1"><option>空格键</option></select><svg class="hi" width="12" height="12"><path d="M2 5a4 4 0 1 1 6 4M1 11.500h10" stroke-width="1.400"/><path d="M0 3l5 1-4 4z" fill="currentColor"/></svg></div>
    </section>
    <section class="pane flex-fill">
      <div class="tabs char-tabs"><button class="t1">预设</button><button class="t2">库</button><button class="cur t3">字符<svg class="ham"><use href="#ham"/></svg></button><svg class="hi ms-auto me-1" width="9" height="8"><use href="#more"/></svg></div>
      <div class="font-row d-flex">
        <div class="font-col d-flex flex-column"><select class="form-select field" aria-label="字体"><option>System</option></select><select class="form-select field" aria-label="字体样式"><option>-</option></select></div>
        <svg class="hi" width="56" height="36"><path d="M1 14l1-4 6-6 3 3-6 6z"/><path d="M8 1.500l5 5M10 4l3-3" stroke-width="3"/><path d="M0 20h16v14H0z" fill="#fff" stroke="#777"/><path d="M1 21h14v6H1z" fill="#000" stroke="none"/><path d="M32 11h23v24H32z" fill="#fff" stroke="#111"/><path d="M40 18h8v10h-8z" fill="#232223" stroke="#111"/><path d="M33 35 55 11" stroke="#b3222a" stroke-width="2"/><path d="M21 26h9v9h-9z" fill="#fff" stroke="#444"/><path d="M21 35l9-9" stroke="#c33"/><path d="M21 1h24v24H21z" fill="#fff" stroke="#111"/><path d="M48 4h4q2 1 1 5M50 1l-3 3 3 3" stroke-width="1.500"/></svg>
      </div>
      <div class="rule"></div>
      <div class="char-row"><svg class="ic" viewBox="0 0 16 14" stroke="none" fill="#bbb" font-family="Liberation Serif" font-weight="700"><text x="0" y="12" font-size="9">T</text><text x="5" y="12" font-size="16">T</text></svg><span><button class="hot">60</button> 像素</span><i class="dn"></i><svg class="ic" viewBox="0 0 16 16" stroke="none" fill="#bbb" font-family="Liberation Serif"><text x="7" y="8" font-size="10">A</text><text x="7" y="16" font-size="10">A</text><path d="M3 3l2 3H1zM3 15l2-3H1zM2.500 5h1v8h-1z"/></svg><button class="hot text-start">自动</button><i class="dn"></i></div>
      <div class="char-row"><svg class="ic" viewBox="0 0 16 16" stroke="none" fill="#bbb"><text x="0" y="11" font-size="11">V</text><text x="8" y="11" font-size="11">A</text><path d="M8 2h1L6 12H5zM7 14l3-2v1h4v1h-4v2z"/></svg><span class="dim">度量标准</span><i class="dn"></i><svg class="ic" viewBox="0 0 16 16" stroke="none"><rect y="1" width="16" height="10" fill="#bbb"/><text x="1" y="10" font-size="10" font-weight="700" fill="#222">VA</text><path d="M1 14h14M3 12l-2 2 2 2M13 12l2 2-2 2" fill="none" stroke="#bbb"/></svg><button class="hot text-start">200</button><i class="dn"></i></div>
      <div class="rule mt-1"></div>
      <div class="char-row stroke-row"><svg class="hi" width="12" height="12"><path d="M0 1.500h12"/><path d="M0 5.500h12" stroke-width="2"/><path d="M0 10.500h12" stroke-width="3"/></svg><span><button class="hot">-</button> &nbsp;像素</span><i class="dn"></i><select class="form-select field" aria-label="描边方式"><option></option></select></div>
      <div class="rule"></div>
      <div class="char-row tall"><svg class="ic" viewBox="0 0 16 14" stroke="none" fill="#bbb" font-family="Liberation Serif" font-weight="700"><text x="5" y="12" font-size="15">T</text><path d="M3 1l2 3H1zM3 13l2-3H1zM2.500 3h1v8h-1z"/></svg><span><button class="hot">100</button> %</span><i class="dn"></i><svg class="ic" viewBox="0 0 16 16" stroke="none" fill="#bbb" font-family="Liberation Serif" font-weight="700"><text x="3" y="11" font-size="15">T</text><path d="M1 14h14M3 12l-2 2 2 2M13 12l2 2-2 2" fill="none" stroke="#bbb"/></svg><span><button class="hot">100</button> %</span><i class="dn"></i></div>
      <div class="char-row"><svg class="ic" viewBox="0 0 16 14" stroke="none" fill="#bbb"><text x="0" y="11" font-size="11">A</text><text x="8" y="7" font-size="8">a</text><path d="M0 13h8v1H0z"/><path d="M11.500 8v6M9 11h5" stroke="#bbb"/></svg><span><button class="hot">0</button> 像素</span><i class="dn"></i><svg class="ic" viewBox="0 0 16 16" stroke="none" fill="#bbb"><text x="4" y="10" font-size="9">あ</text><path d="M2.500 1v10M14.500 1v10" stroke="#bbb" stroke-dasharray="1 1"/><path d="M1 13l4 1.500L1 16zM15 13l-4 1.500 4 1.500z"/></svg><span><button class="hot">0</button> %</span><i class="dn"></i></div>
      <div class="rule mt-1"></div>
      <div class="styles d-flex"><button>T</button><button class="fst-italic ms-1">T</button><button class="ms-1 caps">TT</button><button>T<small>T</small></button><button>T<sup>1</sup></button><button>T<sub>1</sub></button></div>
    </section>
    <section class="pane para-pane">
      <div class="one-tab hi">段落<svg class="ham"><use href="#ham"/></svg></div>
      <div class="aligns d-flex align-items-center hi">
        <button class="tool active hot" aria-label="左对齐"><svg><use href="#alines"/></svg></button><button class="tool" aria-label="居中"><svg><use href="#clines"/></svg></button><button class="tool" aria-label="右对齐"><svg><use href="#rlines"/></svg></button><button class="tool ms-1" aria-label="末行左对齐"><svg><use href="#jl"/></svg></button><button class="tool" aria-label="末行居中"><svg><use href="#jc"/></svg></button><button class="tool" aria-label="末行右对齐"><svg><use href="#jr"/></svg></button><button class="tool ms-1" aria-label="两端对齐"><svg><use href="#jlines"/></svg></button>
      </div>
      <div class="rule"></div>
      <div class="para-row"><span><svg><use href="#indent"/></svg><button class="hot">0</button>像素</span><span><svg><use href="#before"/></svg><button class="hot">0</button>像素</span><span><svg><use href="#first"/></svg><button class="hot">0</button>像素</span></div>
      <div class="para-row"><span><svg><use href="#indentr"/></svg><button class="hot">0</button>像素</span><span><svg><use href="#after"/></svg><button class="hot">0</button>像素</span></div>
    </section>
  </aside>
</main>

<svg class="stamp" width="290" height="138" viewBox="1226 728 290 138" stroke="none" fill="#c9c8c9" aria-label="Baidu 经验">
  <text x="1226" y="818" font-family="Liberation Sans" font-weight="700" font-size="64">Bai</text>
  <ellipse cx="1336.500" cy="764.500" rx="10.500" ry="13.500"/><ellipse cx="1356.500" cy="744" rx="10" ry="14"/><ellipse cx="1382" cy="746" rx="10.500" ry="13.500"/><ellipse cx="1398" cy="770.500" rx="10.500" ry="13.500"/>
  <path d="M1367 766c8 0 12 6 16 12 6 8 19 14 19 27 0 9-7 14-15 14-8 0-12-3-20-3s-12 3-20 3c-9 0-15-6-15-15 0-12 12-17 19-26 4-6 8-12 16-12z"/>
  <text x="1342" y="811" font-family="Liberation Sans" font-weight="700" font-size="40" fill="#38373a">du</text>
  <text x="1412" y="814" font-family="Noto Sans CJK SC" font-weight="900" font-size="48">经验</text>
  <text x="1230" y="855" font-family="Noto Sans" font-weight="500" font-size="32" fill="#d8d7d8">jingyan.baidu.com</text>
</svg>

<footer class="taskbar d-flex align-items-center">
  <button class="start h-100 d-flex align-items-center justify-content-center" aria-label="开始"><svg width="14" height="14" fill="#fff" stroke="none"><path d="M0 2l6-1v5.500H0zM7 1l7-1v6.500H7zM0 7.500h6V13l-6-1zM7 7.500h7V14l-7-1z"/></svg></button>
  <input class="find" placeholder="搜索 Web 和 Windows" aria-label="搜索 Web 和 Windows">
  <button class="taskview" aria-label="任务视图"><svg width="18" height="14"><path d="M4.500 1.500h9v11h-9zM3 3.500H1.500v7H3M15 3.500h1.500v7H15"/></svg></button>
  <button aria-label="Edge"><svg width="18" height="18" viewBox="0 0 18 18" stroke="none" fill="#1683d9"><path d="M1 8C2 3 5 0 9.500 0 14 0 17 3.500 17 8v2H6c0 3 2 4.500 5 4.500 2 0 4-.5 5.500-1.500v3.500c-2 1-4 1.500-6.500 1.500-5 0-8-3-8-7 0-3 2-5.500 5-6.500C4 5 2.500 6 1 8zm5-1.500h6C12 4.500 11 3 9.500 3S6.500 4.500 6 6.500z"/></svg></button>
  <div class="taskbar-hidden"></div>
  <button class="app running" aria-label="After Effects"><svg width="18" height="18" stroke="none"><rect x=".5" y=".5" width="17" height="17" fill="#250845" stroke="#a67bd3"/><text x="3" y="13" font-size="10" font-weight="700" fill="#c89af0">Ae</text></svg></button>
  <button class="app paint" aria-label="画图"><svg width="20" height="20" stroke="none"><rect x="1" y="1" width="18" height="18" rx="2" fill="#f4f7fb" stroke="#6289bd" stroke-width="1.500"/><path d="M4 9q4-1 5-5" stroke="#66aee6" stroke-width="2" fill="none"/><path d="M5 16q6-3 9-12 4 4-2 9-3 3-7 3z" fill="#f09a24"/></svg></button>
  <div class="tray ms-auto d-flex align-items-center">
    <svg width="10" height="6"><path d="M1 5l4-4 4 4" stroke-width="1.300"/></svg>
    <svg width="14" height="10"><path d="M4 2.500h8.500v6H5M13.500 4v3M1 0v3M4 0v3M0 3.500h5M2.500 4v4h2"/><path d="M6 4h6v3H6z" fill="currentColor"/></svg>
    <svg width="14" height="12"><path d="M1 4h2l3-3v10L3 8H1z"/><path d="M8 4q1.500 2 0 4M10 2q3 4 0 8M12 1q4 5 0 10"/></svg>
    <svg width="13" height="12"><path d="M3 11a9 9 0 0 1 9-8M6 11a6 6 0 0 1 6-5M9 11a3 3 0 0 1 3-3" stroke="#999"/><path d="M2 0v4M0 2h4"/></svg>
    <svg width="14" height="13"><path d="M.5.500h13v9H9L7 12 5 9.500H.5zM3 3.500h8M3 6.500h8" stroke-width="1.200"/></svg>
    <span class="ime">英</span>
    <div class="clock text-center">22:22<br>2020/5/17</div>
  </div>
  <div class="peek"></div>
</footer>
<script src="https://cdn.jsdelivr.net/npm/bootstrap@5.3.0/dist/js/bootstrap.bundle.min.js"></script>
</body>
</html>
